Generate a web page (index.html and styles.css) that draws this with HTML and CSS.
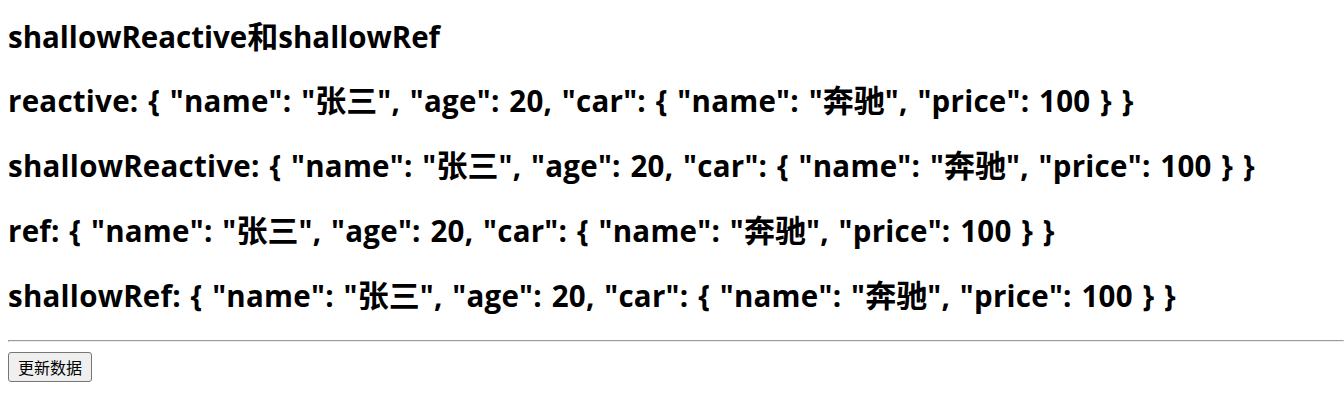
FILE: index.html
```html
<!DOCTYPE html>
<html lang="zh-CN">

<head>
    <meta charset="UTF-8">
    <meta name="viewport" content="width=device-width, initial-scale=1.0">
    <title>shallowReactive和shallowRef</title>
    <link rel="stylesheet" href="styles.css">
</head>

<body>

    <div id="app">
        <h2 class="title">shallowReactive<span class="cn">和</span>shallowRef</h2>

        <div class="list">
            <h2 class="line">reactive: { "name": "<span class="cn">张三</span>", "age": 20, "car": { "name": "<span class="cn">奔驰</span>", "price": 100 } }</h2>
            <h2 class="line">shallowReactive: { "name": "<span class="cn">张三</span>", "age": 20, "car": { "name": "<span class="cn">奔驰</span>", "price": 100 } }</h2>
            <h2 class="line">ref: { "name": "<span class="cn">张三</span>", "age": 20, "car": { "name": "<span class="cn">奔驰</span>", "price": 100 } }</h2>
            <h2 class="line">shallowRef: { "name": "<span class="cn">张三</span>", "age": 20, "car": { "name": "<span class="cn">奔驰</span>", "price": 100 } }</h2>
        </div>

        <hr class="divider">

        <div class="actions">
            <button class="update-button">更新数据</button>
        </div>
    </div>

</body>

</html>
```

FILE: styles.css
```css
body {
    margin: 8px 0 8px 8px;
    font-family: "Open Sans", "Noto Sans CJK SC", sans-serif;
    color: #000;
    background-color: #fff;
}

h2 {
    font-size: 29.5px;
    font-weight: bold;
    line-height: 32px;
    letter-spacing: 0.25px;
    word-spacing: 1.8px;
    margin: 0;
}

.cn {
    font-family: "Noto Sans CJK SC", sans-serif;
    font-size: 31px;
    line-height: 26px;
    letter-spacing: 0;
}

.title {
    margin-top: 13px;
    margin-bottom: 32px;
    letter-spacing: 0;
}

.list {
    display: flex;
    flex-direction: column;
    gap: 33px;
}

.divider {
    margin: 28px 0 10px 0;
}

.actions {
    display: flex;
}

.update-button {
    font-family: "Noto Sans CJK SC", sans-serif;
    font-size: 16px;
    line-height: 22px;
    padding: 3px 9px;
    color: #000;
    background-color: #efefef;
    border: 1px solid #767676;
    border-radius: 3px;
}
```
